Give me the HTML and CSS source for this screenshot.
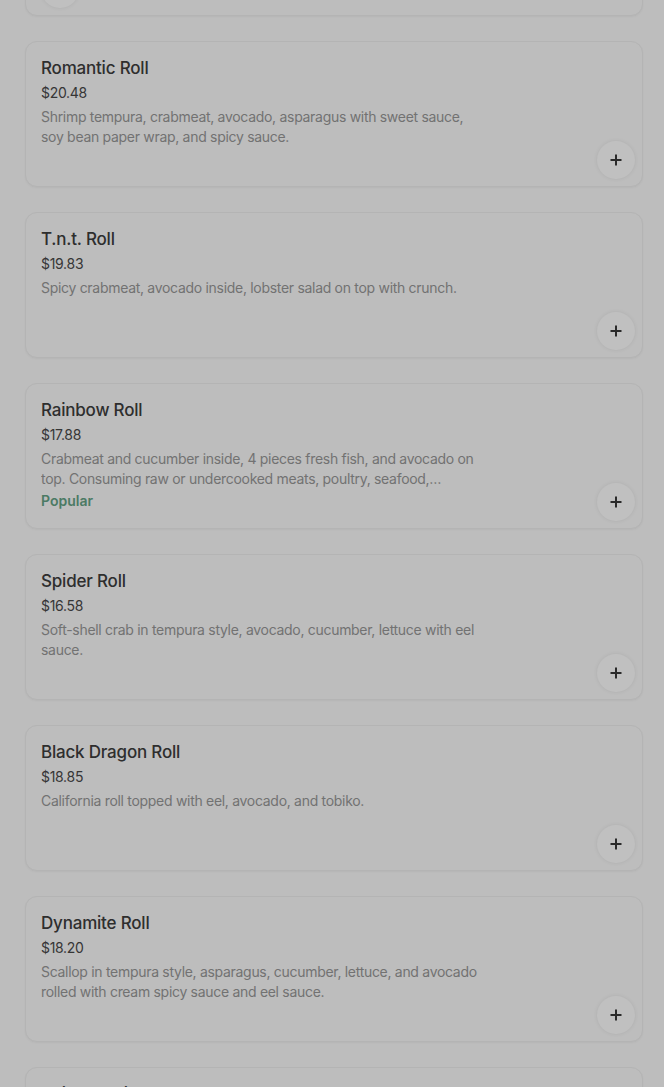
FILE: index.html
```html
<!DOCTYPE html>
<html lang="en">
<head>
<meta charset="utf-8">
<title>Menu</title>
<link rel="stylesheet" href="styles.css">
</head>
<body>
<main class="list">
  <article class="card card--partial">
    <button class="add" aria-label="Add"><svg viewBox="0 0 12 12" width="12" height="12"><path d="M6 0.5v11M0.5 6h11" stroke="currentColor" stroke-width="2"/></svg></button>
  </article>
  <article class="card">
    <div class="info">
      <h3 class="name">Romantic Roll</h3>
      <div class="price">$20.48</div>
      <p class="desc">Shrimp tempura, crabmeat, avocado, asparagus with sweet sauce, soy bean paper wrap, and spicy sauce.</p>
    </div>
    <button class="add" aria-label="Add"><svg viewBox="0 0 12 12" width="12" height="12"><path d="M6 0.5v11M0.5 6h11" stroke="currentColor" stroke-width="2"/></svg></button>
  </article>
  <article class="card">
    <div class="info">
      <h3 class="name">T.n.t. Roll</h3>
      <div class="price">$19.83</div>
      <p class="desc">Spicy crabmeat, avocado inside, lobster salad on top with crunch.</p>
    </div>
    <button class="add" aria-label="Add"><svg viewBox="0 0 12 12" width="12" height="12"><path d="M6 0.5v11M0.5 6h11" stroke="currentColor" stroke-width="2"/></svg></button>
  </article>
  <article class="card">
    <div class="info">
      <h3 class="name">Rainbow Roll</h3>
      <div class="price">$17.88</div>
      <p class="desc desc--clamp">Crabmeat and cucumber inside, 4 pieces fresh fish, and avocado on top. Consuming raw or undercooked meats, poultry, seafood,…</p>
      <div class="badge">Popular</div>
    </div>
    <button class="add" aria-label="Add"><svg viewBox="0 0 12 12" width="12" height="12"><path d="M6 0.5v11M0.5 6h11" stroke="currentColor" stroke-width="2"/></svg></button>
  </article>
  <article class="card">
    <div class="info">
      <h3 class="name">Spider Roll</h3>
      <div class="price">$16.58</div>
      <p class="desc">Soft-shell crab in tempura style, avocado, cucumber, lettuce with eel sauce.</p>
    </div>
    <button class="add" aria-label="Add"><svg viewBox="0 0 12 12" width="12" height="12"><path d="M6 0.5v11M0.5 6h11" stroke="currentColor" stroke-width="2"/></svg></button>
  </article>
  <article class="card">
    <div class="info">
      <h3 class="name">Black Dragon Roll</h3>
      <div class="price">$18.85</div>
      <p class="desc">California roll topped with eel, avocado, and tobiko.</p>
    </div>
    <button class="add" aria-label="Add"><svg viewBox="0 0 12 12" width="12" height="12"><path d="M6 0.5v11M0.5 6h11" stroke="currentColor" stroke-width="2"/></svg></button>
  </article>
  <article class="card">
    <div class="info">
      <h3 class="name">Dynamite Roll</h3>
      <div class="price">$18.20</div>
      <p class="desc">Scallop in tempura style, asparagus, cucumber, lettuce, and avocado rolled with cream spicy sauce and eel sauce.</p>
    </div>
    <button class="add" aria-label="Add"><svg viewBox="0 0 12 12" width="12" height="12"><path d="M6 0.5v11M0.5 6h11" stroke="currentColor" stroke-width="2"/></svg></button>
  </article>
  <article class="card">
    <div class="info">
      <h3 class="name">Philadelphia Roll</h3>
    </div>
  </article>
</main>
</body>
</html>
```

FILE: styles.css
```css
* { box-sizing: border-box; }
html, body { margin: 0; padding: 0; }
body {
  background: #bdbdbd;
  font-family: Inter, "Noto Sans", sans-serif;
  height: 1087px;
  overflow: hidden;
}
.list {
  display: flex;
  flex-direction: column;
  gap: 25px;
  padding: 0 21px 0 25px;
  margin-top: -130px;
}
.card {
  position: relative;
  height: 146px;
  border: 1px solid #b4b4b4;
  border-radius: 12px;
  background: #bdbdbd;
  box-shadow: 0 1px 2px rgba(0,0,0,0.04);
  display: flex;
  justify-content: space-between;
  padding: 16px 7px 7px 15px;
}
.info {
  width: 445px;
  display: flex;
  flex-direction: column;
}
.name {
  margin: 0;
  font-size: 17px;
  font-weight: 500;
  line-height: 20px;
  color: #2e2e2e;
  letter-spacing: -0.2px;
}
.price {
  margin-top: 5px;
  font-size: 14px;
  line-height: 20px;
  color: #363636;
  letter-spacing: -0.3px;
}
.desc {
  margin: 4px 0 0;
  font-size: 14px;
  line-height: 20px;
  color: #727272;
  letter-spacing: -0.3px;
}
.desc--clamp {
  display: -webkit-box;
  -webkit-line-clamp: 2;
  -webkit-box-orient: vertical;
  overflow: hidden;
}
.badge {
  margin-top: 2px;
  font-size: 14px;
  line-height: 20px;
  font-weight: 600;
  color: #4b7a64;
}
.add {
  align-self: flex-end;
  width: 38px;
  height: 38px;
  border-radius: 50%;
  border: none;
  background: #c0c0c0;
  box-shadow: 0 0 4px rgba(0,0,0,0.08);
  color: #2a2a2a;
  display: flex;
  align-items: center;
  justify-content: center;
  padding: 0;
  flex-shrink: 0;
}
```
